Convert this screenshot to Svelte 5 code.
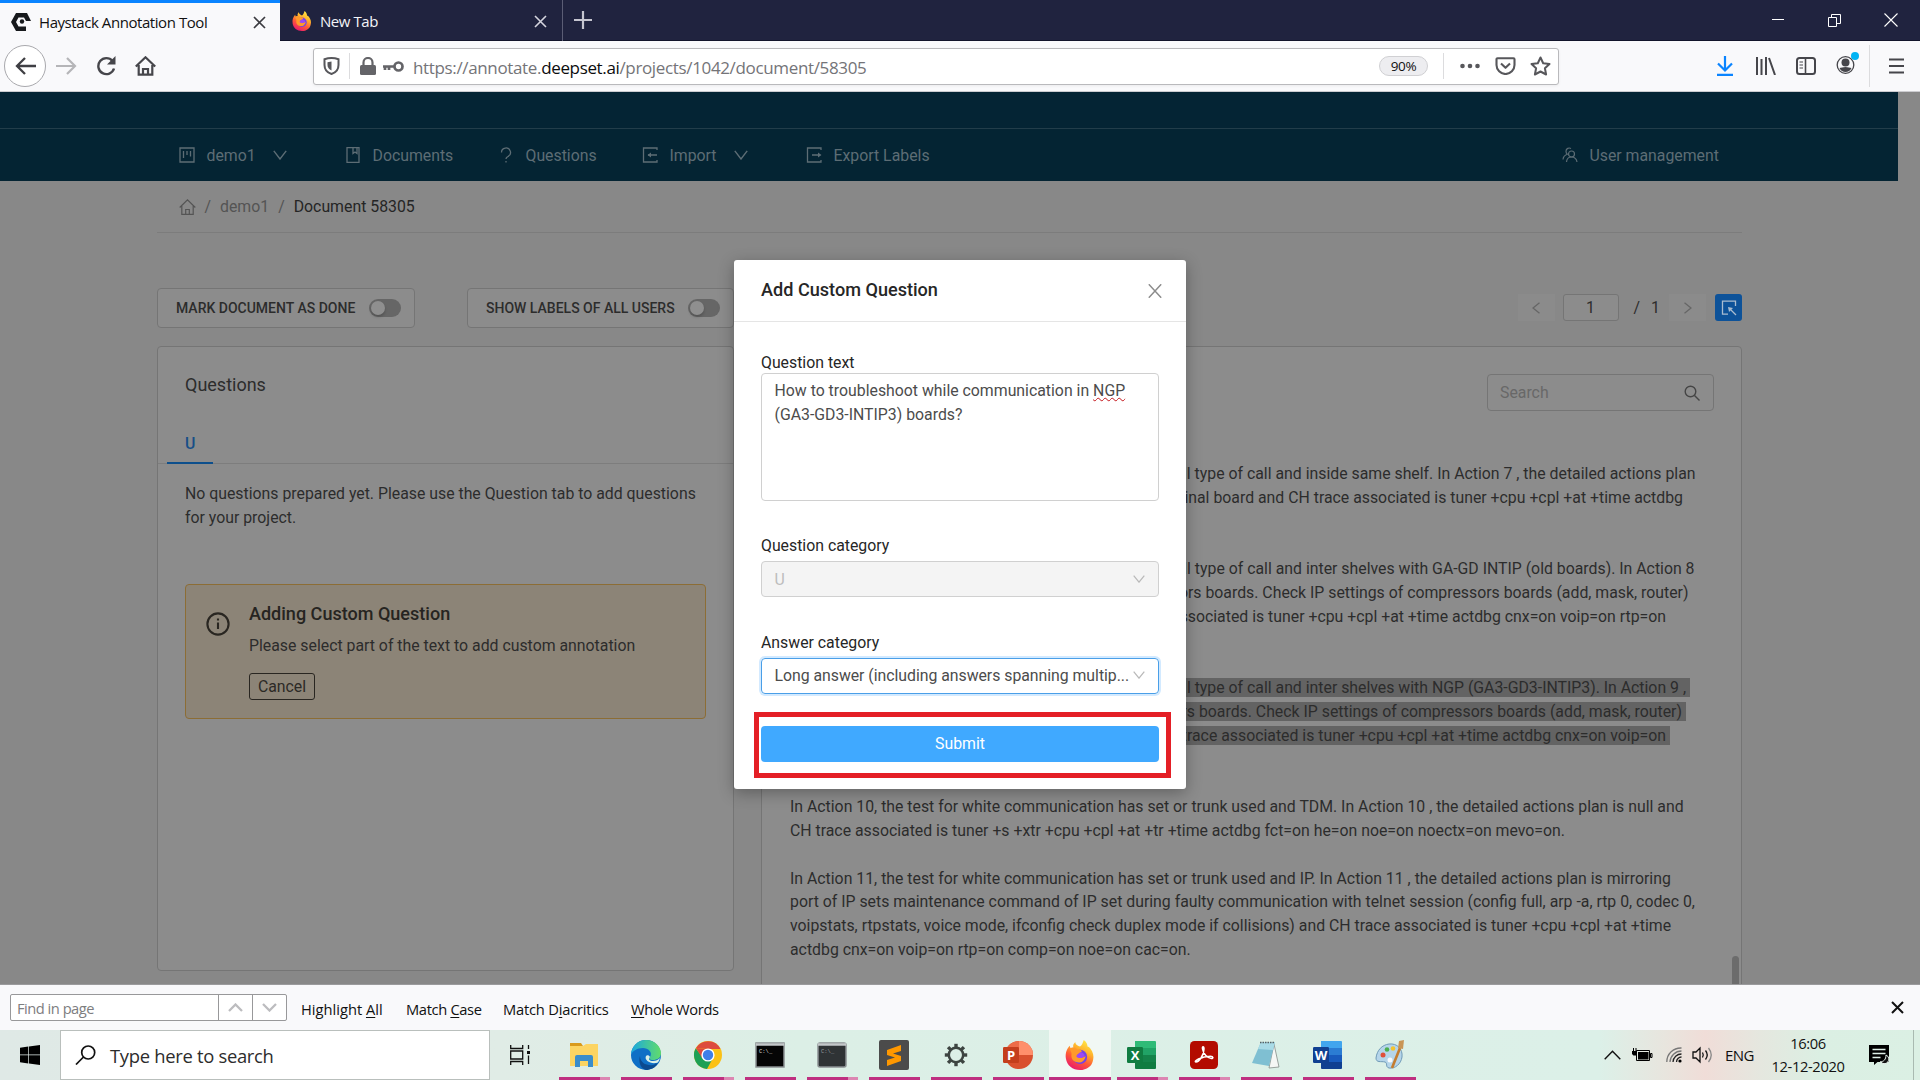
<script>
  const lead = [
    { right: 1695.5, text: 'all type of call and inside same shelf. In Action 7 , the detailed actions plan' },
    { right: 1683, text: 'inal board and CH trace associated is tuner +cpu +cpl +at +time actdbg' },
    null,
    null,
    { right: 1694.5, text: 'all type of call and inter shelves with GA-GD INTIP (old boards). In Action 8' },
    { right: 1688.5, text: 'ors boards. Check IP settings of compressors boards (add, mask, router)' },
    { right: 1666, text: 'associated is tuner +cpu +cpl +at +time actdbg cnx=on voip=on rtp=on' },
    null,
    null,
    { right: 1690, marked: true, text: 'all type of call and inter shelves with NGP (GA3-GD3-INTIP3). In Action 9 ,' },
    { right: 1686, marked: true, text: 'rs boards. Check IP settings of compressors boards (add, mask, router)' },
    { right: 1670, marked: true, text: 'trace associated is tuner +cpu +cpl +at +time actdbg cnx=on voip=on' },
    null,
    null
  ];
  const tail = [
    'In Action 10, the test for white communication has set or trunk used and TDM. In Action 10 , the detailed actions plan is null and',
    'CH trace associated is tuner +s +xtr +cpu +cpl +at +tr +time actdbg fct=on he=on noe=on noectx=on mevo=on.',
    '',
    'In Action 11, the test for white communication has set or trunk used and IP. In Action 11 , the detailed actions plan is mirroring',
    'port of IP sets maintenance command of IP set during faulty communication with telnet session (config full, arp -a, rtp 0, codec 0,',
    'voipstats, rtpstats, voice mode, ifconfig check duplex mode if collisions) and CH trace associated is tuner +cpu +cpl +at +time',
    'actdbg cnx=on voip=on rtp=on comp=on noe=on cac=on.'
  ];
  const apps = [
    { id: 'explorer', many: true }, { id: 'edge' }, { id: 'chrome', many: true }, { id: 'cmd' },
    { id: 'prompt', many: true }, { id: 'sublime' }, { id: 'settings' }, { id: 'ppt' },
    { id: 'firefox', active: true }, { id: 'excel', many: true }, { id: 'acrobat', many: true },
    { id: 'notepad' }, { id: 'word' }, { id: 'paint' }
  ];
  const teeth = [0, 45, 90, 135, 180, 225, 270, 315];
</script>

{#snippet fox(size)}
  <svg width={size} height={size} viewBox="0 0 32 32">
    <defs>
      <linearGradient id="foxA" x1="0.8" y1="0" x2="0.3" y2="1">
        <stop offset="0" stop-color="#fff04a" /><stop offset=".35" stop-color="#ffb32c" />
        <stop offset=".65" stop-color="#ff5a36" /><stop offset="1" stop-color="#e8176f" />
      </linearGradient>
    </defs>
    <path fill="url(#foxA)" d="M20 0c3 2 4 5 4 7 1 0 2 1 3 2 3 4 4 8 3 12-1 7-7 11-14 11C8 32 2 27 1 20 0 14 2 9 5 6l1 3 3-1c-1-3 1-5 2-6 0 3 3 4 5 5 2-1 3-4 4-7z" />
    <circle cx="16" cy="18" r="7.6" fill="#7543e5" />
    <path fill="#ff9a2a" d="M5 9c3-2 6-1 8 1 2 0 4 0 5 2-1 2-4 2-5 4 1 3 5 4 9 1-1 5-4 7-7 7-6 0-9-4-8-9 0-2-1-3-2-6z" />
    <path fill="#9b49f5" d="M12 17c1-2 3-2 4-4 3 0 5 2 5 4-3 3-8 3-9 0z" />
  </svg>
{/snippet}

{#snippet chevron(w, h)}
  <svg width={w} height={h} viewBox="0 0 14 10" preserveAspectRatio="none" fill="none" stroke="currentColor" stroke-width="1.4"><path d="M.8.8 7 9 13.2.8" /></svg>
{/snippet}

{#snippet office(letter, a, b, c, d)}
  <svg width="30" height="30" viewBox="0 0 30 30">
    <path fill={a} d="M8 1h20a1 1 0 0 1 1 1v6H8z" /><path fill={b} d="M8 8h21v7H8z" />
    <path fill={c} d="M8 15h21v7H8z" /><path fill={d} d="M8 22h21v6a1 1 0 0 1-1 1H9a1 1 0 0 1-1-1z" />
    <rect y="7" width="16" height="16" rx="1.2" fill={d} />
    <text x="8" y="20" text-anchor="middle" font-family="Open Sans, sans-serif" font-weight="700" font-size="13" fill="#fff">{letter}</text>
  </svg>
{/snippet}

<div class="screen">
  <header class="tabs">
    <div class="tab current">
      <svg width="20" height="20" viewBox="0 0 20 20"><path fill="#17191c" d="M5 1h11l4 8h-5l-2-3.500H7.500L5 10l2.500 4.500H15V19H5L0 10z" /><circle cx="11" cy="9.500" r="2.200" fill="#17191c" /></svg>
      <span class="label">Haystack Annotation Tool</span>
      <svg class="x" width="13" height="13" viewBox="0 0 13 13" stroke="#3b3b40" stroke-width="1.700"><path d="m1 1 11 11M12 1 1 12" /></svg>
    </div>
    <div class="tab other">
      {@render fox(20)}
      <span class="label">New Tab</span>
      <svg class="x" width="13" height="13" viewBox="0 0 13 13" stroke="#d5d5de" stroke-width="1.600"><path d="m1 1 11 11M12 1 1 12" /></svg>
    </div>
    <svg class="plus" width="18" height="18" viewBox="0 0 18 18" stroke="#c5c5d0" stroke-width="2.200"><path d="M9 0v18M0 9h18" /></svg>
    <div class="window">
      <svg width="12" height="14" viewBox="0 0 12 14" stroke="#fff"><path d="M0 6.500h12" /></svg>
      <svg width="13" height="13" viewBox="0 0 13 13" stroke="#fff" fill="none"><path d="M.5 3.500h8v9h-8zM3.500 3V.5h9v9H9" /></svg>
      <svg width="14" height="14" viewBox="0 0 14 14" stroke="#fff" stroke-width="1.100"><path d="m.5.5 13 13M13.500.5l-13 13" /></svg>
    </div>
  </header>

  <div class="toolbar">
    <div class="nav-buttons">
      <span class="back"><svg width="21" height="18" viewBox="0 0 21 18" fill="none" stroke="#3f3f44" stroke-width="2.300"><path d="M21 9H2M10 1 2 9l8 8" /></svg></span>
      <svg width="21" height="18" viewBox="0 0 21 18" fill="none" stroke="#b5b5b8" stroke-width="2.200"><path d="M0 9h19M11 1l8 8-8 8" /></svg>
      <svg width="20" height="20" viewBox="0 0 20 20" fill="none" stroke="#46464b" stroke-width="2.400"><path d="M16.500 5A8 8 0 1 0 18 12.500" /><path fill="#46464b" stroke="none" d="M19.500 0v8.500H11z" /></svg>
      <svg width="21" height="20" viewBox="0 0 21 20" fill="none" stroke="#46464b" stroke-width="2.200"><path d="M.8 10.500 10.500 1.300l9.700 9.200M3.700 9v9.700h13.600V9" /><path d="M8 19v-6h5v6" /></svg>
    </div>
    <div class="url">
      <svg width="17" height="18" viewBox="0 0 17 18" fill="none" stroke="#57575b" stroke-width="2"><path d="M8.500 1C6 1 3.500 1.500 1.500 2.200V8c0 4.500 3 7.800 7 9 4-1.200 7-4.500 7-9V2.200C13.500 1.500 11 1 8.500 1z" /><path d="M8.500 4.500v9c-2.500-1-4-3-4-5.500V5.200z" fill="#57575b" stroke="none" /></svg>
      <i class="rule"></i>
      <svg class="lock" width="16" height="18" viewBox="0 0 16 18"><rect y="8" width="16" height="10" rx="1.500" fill="#646468" /><path d="M3.500 9V5.500a4.500 4.500 0 0 1 9 0V9" fill="none" stroke="#646468" stroke-width="2.200" /></svg>
      <svg class="key" width="21" height="11" viewBox="0 0 21 11" fill="none" stroke="#646468" stroke-width="2.700"><circle cx="15.500" cy="5.500" r="4" /><path d="M11.500 5.500H0M2 5.500v3.500M6 5.500v3.500" /></svg>
      <span class="address">https://annotate.<b>deepset.ai</b>/projects/1042/document/58305</span>
      <span class="zoom">90%</span>
      <i class="rule tall"></i>
      <svg class="dots" width="20" height="6" viewBox="0 0 20 6" fill="#57575b"><circle cx="2.500" cy="3" r="2.300" /><circle cx="10" cy="3" r="2.300" /><circle cx="17.500" cy="3" r="2.300" /></svg>
      <svg class="pocket" width="21" height="18" viewBox="0 0 21 18" fill="none" stroke="#57575b" stroke-width="2.100" stroke-linejoin="round"><path d="M2.500 1.200h16q1 0 1 1V8a9 9 0 0 1-18 0V2.200q0-1 1-1z" /><path d="m6 6.500 4.500 4.300L15 6.500" /></svg>
      <svg width="21" height="20" viewBox="0 0 21 20" fill="none" stroke="#57575b" stroke-width="2" stroke-linejoin="round"><path d="m10.500 1.500 2.700 5.700 6.300.8-4.600 4.300 1.200 6.200-5.600-3-5.600 3 1.200-6.200L1.500 8l6.300-.8z" /></svg>
    </div>
    <div class="actions">
      <svg width="16" height="20" viewBox="0 0 16 20" fill="none" stroke="#0a84ff" stroke-width="2.200"><path d="M8 0v14M1 7.500l7 7 7-7M0 18.800h16" /></svg>
      <svg width="20" height="18" viewBox="0 0 20 18" stroke="#46464b" stroke-width="2"><path d="M1 0v18M5.500 2v16M10 0v18M13 1l6 17" /></svg>
      <svg width="20" height="18" viewBox="0 0 20 18" fill="none" stroke="#46464b" stroke-width="2"><rect x="1" y="1" width="18" height="16" rx="2.500" /><path d="M9.500 1v16" stroke-width="1.600" /><path d="M3.500 5H7M3.500 8H7M3.500 11H7" stroke-width="1.200" /></svg>
      <svg class="account" width="24" height="23" viewBox="0 0 24 23"><circle cx="9.500" cy="13" r="8.300" fill="none" stroke="#46464b" stroke-width="1.300" /><circle cx="9.500" cy="10.500" r="4" fill="#46464b" /><path d="M3.500 16c2 0 3-1 6-1s4 1 6 1c-1 2.500-3.500 4-6 4s-5-1.500-6-4z" fill="#46464b" /><circle cx="19" cy="4" r="4" fill="#00b3f4" /></svg>
      <i class="rule menu-rule"></i>
      <svg width="15" height="16" viewBox="0 0 15 16" stroke="#46464b" stroke-width="2.200"><path d="M0 1.500h15M0 8h15M0 14.500h15" /></svg>
    </div>
  </div>

  <main class="page">
    <div class="brand"></div>
    <nav class="menu">
      <span><svg width="16" height="16" viewBox="0 0 16 16" fill="none" stroke="currentColor" stroke-width="1.300"><path d="M1 1h14v14H1zM4.500 4v7M8 4v4M11.500 4v5.500" /></svg>demo1<em>{@render chevron(14, 10)}</em></span>
      <span><svg width="16" height="16" viewBox="0 0 16 16" fill="none" stroke="currentColor" stroke-width="1.300"><path d="M2 .7h12v14.600H2zM8 1v5.500l2-1.500 2 1.500V1" /></svg>Documents</span>
      <span><svg width="16" height="16" viewBox="0 0 16 16" fill="none" stroke="currentColor" stroke-width="1.300"><path d="M3.500 5.500a4.500 4.500 0 1 1 6.500 4Q8 10.500 8 12M8 14v1.600" /></svg>Questions</span>
      <span><svg width="16" height="16" viewBox="0 0 16 16" fill="none" stroke="currentColor" stroke-width="1.300"><path d="M15 3V1H1.500v14H15v-2M15 8H6" /><path d="m9 5.500-3.500 2.500L9 10.500z" fill="currentColor" stroke="none" /></svg>Import<em>{@render chevron(14, 10)}</em></span>
      <span><svg width="16" height="16" viewBox="0 0 16 16" fill="none" stroke="currentColor" stroke-width="1.300"><path d="M15 3V1H1.500v14H15v-2M6 8h8" /><path d="m12 5.500 3.500 2.500-3.500 2.500z" fill="currentColor" stroke="none" /></svg>Export Labels</span>
      <span><svg width="16" height="16" viewBox="0 0 16 16" fill="none" stroke="currentColor" stroke-width="1.200"><circle cx="9.500" cy="7" r="3" /><path d="M4.500 15c.2-3 2-5 5-5s5 2 5.500 5M9 1.500C7 .3 4 1.500 4 4.200c0 1.500.5 2.300 1.300 3C3 8 1.200 9.500 1 12.500" /></svg>User management</span>
    </nav>

    <div class="content">
      <div class="crumbs">
        <svg width="17" height="16" viewBox="0 0 17 16" fill="none" stroke="currentColor" stroke-width="1.200"><path d="M.7 8.500 8.500.9l7.800 7.600M2.800 7v8.400h11.400V7M6.700 15v-4.500h3.600V15" /></svg>
        <i>/</i><span>demo1</span><i>/</i><strong>Document 58305</strong>
      </div>

      <div class="controls">
        <div class="toggle">MARK DOCUMENT AS DONE<span class="switch"></span></div>
        <div class="toggle second">SHOW LABELS OF ALL USERS<span class="switch"></span></div>
        <div class="pager">
          <span class="step"><svg width="8" height="12" viewBox="0 0 8 12" fill="none" stroke="#666" stroke-width="1.300"><path d="M7.500.7 1 6l6.500 5.300" /></svg></span>
          <span class="number">1</span>
          <span class="slash">/</span><span>1</span>
          <span class="step next"><svg width="8" height="12" viewBox="0 0 8 12" fill="none" stroke="#666" stroke-width="1.300"><path d="M.5.7 7 6 .5 11.300" /></svg></span>
          <span class="select"><svg width="16" height="16" viewBox="0 0 16 16" fill="none" stroke="#a9bccf" stroke-width="1.300"><path d="M14.500 6V1.200H1.500v13H7M15 15 8.500 8.500" /><path d="m7 7 5 1-4 4z" fill="#a9bccf" stroke="none" /></svg></span>
        </div>
      </div>

      <div class="cards">
        <section class="card left">
          <h2>Questions</h2>
          <div class="tabbar"><span>U</span></div>
          <p>No questions prepared yet. Please use the Question tab to add questions<br />for your project.</p>
          <div class="alert">
            <svg width="24" height="24" viewBox="0 0 24 24" fill="none" stroke="#292621" stroke-width="2.100"><circle cx="12" cy="12" r="10.600" /><path d="M12 10.500V17M12 6.500v2" /></svg>
            <div>
              <h3>Adding Custom Question</h3>
              <div class="desc">Please select part of the text to add custom annotation</div>
              <button>Cancel</button>
            </div>
          </div>
        </section>
        <section class="card right">
          <div class="search">Search<svg width="16" height="16" viewBox="0 0 16 16" fill="none" stroke="#454545" stroke-width="1.400"><circle cx="6.500" cy="6.500" r="5.300" /><path d="m10.500 10.500 5 5" /></svg></div>
          <div class="doc">
            {#each lead as line}
              <div class="line end" style:width={line ? `${line.right - 790}px` : null}>{#if line}<span class:marked={line.marked}>{line.text}</span>{/if}</div>
            {/each}
            {#each tail as line}
              <div class="line">{line}</div>
            {/each}
          </div>
          <i class="thumb"></i>
        </section>
      </div>
    </div>

    <div class="modal">
      <div class="title">Add Custom Question
        <svg width="14" height="14" viewBox="0 0 14 14" stroke="#8c8c8c" stroke-width="1.500"><path d="m.8.3 12.400 13.400M13.200.3.8 13.700" /></svg>
      </div>
      <div class="body">
        <div class="caption first">Question text</div>
        <div class="area">How to troubleshoot while communication in <u>NGP</u><br />(GA3-GD3-INTIP3) boards?</div>
        <div class="caption">Question category</div>
        <div class="field disabled"><span>U</span>{@render chevron(12, 8)}</div>
        <div class="caption answer">Answer category</div>
        <div class="field focus"><span>Long answer (including answers spanning multip...</span>{@render chevron(12, 8)}</div>
        <button class="submit">Submit</button>
      </div>
      <i class="highlight"></i>
    </div>
  </main>

  <div class="findbar">
    <div class="find"><span>Find in page</span>
      <b><svg width="15" height="9" viewBox="0 0 15 9" fill="none" stroke="#bcbcbf" stroke-width="2.300"><path d="M1 8 7.500 1.500 14 8" /></svg></b>
      <b><svg width="15" height="9" viewBox="0 0 15 9" fill="none" stroke="#bcbcbf" stroke-width="2.300"><path d="m1 1 6.500 6.500L14 1" /></svg></b>
    </div>
    <span class="opt o1">Highlight <u>A</u>ll</span><span class="opt o2">Match <u>C</u>ase</span><span class="opt o3">Match D<u>i</u>acritics</span><span class="opt"><u>W</u>hole Words</span>
    <svg class="close" width="13" height="13" viewBox="0 0 13 13" stroke="#111" stroke-width="2"><path d="m1 1 11 11M12 1 1 12" /></svg>
  </div>

  <footer class="taskbar">
    <div class="start"><svg width="20" height="20" viewBox="0 0 20 20"><path d="M0 2.800 8.300 1.600v8H0zM9 1.500 20 0v9.600H9zM0 10.300h8.300v8.100L0 17.200zM9 10.300h11V20L9 18.500z" /></svg></div>
    <div class="task-search"><svg width="21" height="20" viewBox="0 0 21 20" fill="none" stroke="#111" stroke-width="1.700"><circle cx="13.200" cy="7.500" r="6.500" /><path d="M8.500 12 1 19.500" /></svg><span>Type here to search</span></div>
    <div class="view"><svg width="21" height="20" viewBox="0 0 21 20" fill="none" stroke="#111" stroke-width="1.300"><path d="M.7 0v3.500h12V0M.7 20v-3.500h12V20M.7 6h12v8H.7zM18.500 0v4M18.500 10.500V19" /><path d="M17 6h3v3h-3z" fill="#111" stroke="none" /></svg></div>
    <div class="apps">
      {#each apps as app}
        <div class="app" class:active={app.active} class:many={app.many}>
          {#if app.id === 'explorer'}
            <svg width="30" height="26" viewBox="0 0 30 26"><path fill="#d99a1c" d="M1 1h11l2 3H1z" /><path fill="#fcd462" d="M1 4h13l3-2h12v22H1z" /><path fill="#3a8dcb" d="M6 25V15q0-2 2-2h14q2 0 2 2v10h-5v-6h-8v6z" /></svg>
          {:else if app.id === 'edge'}
            <svg width="32" height="32" viewBox="0 0 32 32"><defs><linearGradient id="edgeG"><stop stop-color="#1aa7e0" /><stop offset="1" stop-color="#62dc6a" /></linearGradient></defs><circle cx="16" cy="16" r="15" fill="#0f6fc6" /><path fill="url(#edgeG)" d="M1 15C2 7 8 1 16 1c9 0 15 7 15 13 0 5-4 7-8 7-3 0-5-1-3-3 3-5-2-9-7-9C7 9 3 12 1 15z" /><path fill="#0c4a8f" d="M10 17c0 7 7 10 13 9l5-2c-3 5-8 7-12 7-5-1-8-8-6-14z" /><path fill="#dcefe7" d="M20 18c-2 2-1 4 3 4 3 0 5-1 7-3-1 3-2 5-4 5-6 1-12-3-10-7 1-1 3-1 4 1z" /></svg>
          {:else if app.id === 'chrome'}
            <svg width="30" height="30" viewBox="0 0 30 30"><circle cx="15" cy="15" r="14" fill="#fbc116" /><path fill="#dd4b3e" d="M3 8a14 14 0 0 1 24.500 1H15z" /><path fill="#1ea055" d="M2.700 8.200A14 14 0 0 0 14 29l6-11-10 0z" /><path fill="#dd4b3e" d="M3 8 9 18l6-9z" /><circle cx="15" cy="15" r="6.600" fill="#fff" /><circle cx="15" cy="15" r="5.200" fill="#3f7fe8" /></svg>
          {:else if app.id === 'cmd' || app.id === 'prompt'}
            <svg width="30" height="26" viewBox="0 0 30 26"><rect x="1" y="1" width="28" height="24" rx={app.id === 'cmd' ? 0 : 2} fill={app.id === 'cmd' ? '#050505' : '#2f3335'} stroke="#8b9092" stroke-width="1.500" /><path d="M1 2.500h28" stroke="#c4c8ca" stroke-width="2.500" /><text x="4" y="11" font-family="Liberation Mono, monospace" font-size="5.500" fill={app.id === 'cmd' ? '#ddd' : '#9a9da0'}>C:\_</text></svg>
          {:else if app.id === 'sublime'}
            <svg width="30" height="30" viewBox="0 0 30 30"><rect width="30" height="30" rx="2" fill="#4b4b4b" /><path fill="#ff9800" d="m8 10 14-5v6l-8 2.500 8 2.500v5L8 26v-6l8-2.500L8 15z" /></svg>
          {:else if app.id === 'settings'}
            <svg width="24" height="24" viewBox="0 0 24 24" fill="none" stroke="#3d4441"><circle cx="12" cy="12" r="7.200" stroke-width="2.500" />{#each teeth as angle}<path d="M12 .8v4" stroke-width="3.400" transform="rotate({angle} 12 12)" />{/each}</svg>
          {:else if app.id === 'ppt'}
            <svg width="30" height="30" viewBox="0 0 30 30"><circle cx="16" cy="15" r="14" fill="#d9502e" /><path fill="#ff8f6b" d="M16 1a14 14 0 0 1 14 14H16z" /><path fill="#ed6c47" d="M16 1v14H2A14 14 0 0 1 16 1z" /><rect y="7" width="16" height="16" rx="1.200" fill="#c43e1c" /><text x="8" y="20" text-anchor="middle" font-family="Open Sans, sans-serif" font-weight="700" font-size="13" fill="#fff">P</text></svg>
          {:else if app.id === 'firefox'}
            {@render fox(30)}
          {:else if app.id === 'excel'}
            {@render office('X', '#2fbb77', '#21a366', '#14834a', '#107c41')}
          {:else if app.id === 'word'}
            {@render office('W', '#41a5ee', '#2b7cd3', '#185abd', '#103f91')}
          {:else if app.id === 'acrobat'}
            <svg width="28" height="28" viewBox="0 0 28 28"><rect width="28" height="28" rx="4.500" fill="#b30b00" /><path d="M6 21c3 0 8-7 8-13 0-3-2-3-1.500 0 .8 5 5 9 9 9.500 2 0 2-2.200-1-2.200-4 0-9 1.200-12 2.700-3 1.500-4 3-2.500 3z" fill="none" stroke="#fff" stroke-width="1.500" /></svg>
          {:else if app.id === 'notepad'}
            <svg width="30" height="28" viewBox="0 0 30 28"><path fill="#f6f7f5" stroke="#848b88" stroke-width=".8" d="m23 3 5 23-10 1z" /><path fill="#7fbfd2" d="M10 1h14l-6 24-17-3z" /><path fill="#a9dbe7" d="M10 1h14l-2 8-15-1z" /><path stroke="#596264" stroke-width="1.500" stroke-dasharray="1.500 1" d="M9 1.500h15" /></svg>
          {:else}
            <svg width="30" height="30" viewBox="0 0 30 30"><path fill="#b5d5ea" stroke="#6f9ab7" d="M14 4C22 3 28 9 27 17c-1 7-7 12-13 11-4-1-1-5-4-6-4-1-9 1-9-4C2 10 7 5 14 4z" /><circle cx="8" cy="15" r="2.500" fill="#df4f3a" /><circle cx="12" cy="9.500" r="2.300" fill="#4caf50" /><circle cx="18" cy="8.500" r="2.300" fill="#f4c430" /><circle cx="15" cy="20" r="2.500" fill="#f8fbfd" /><path d="M17 28 25 8" stroke="#c47d30" stroke-width="2.600" /><path fill="#c99555" d="m23 8 1-7 5-1-1 9z" /></svg>
          {/if}
          <i class="bar"></i>
        </div>
      {/each}
    </div>
    <div class="tray">
      <svg class="up" width="17" height="10" viewBox="0 0 17 10" fill="none" stroke="#111" stroke-width="1.400"><path d="m.7 9.300 7.800-8 7.800 8" /></svg>
      <svg class="battery" width="21" height="14" viewBox="0 0 21 14"><path fill="none" stroke="#000" d="M4.500 2.500h13v10h-13zM18.500 5.500v4h1.500v-4z" /><path d="M6 4h10.500v7.500H6zM0 3h5v3L4 7.500H1.500L0 6zM1 0h1v3H1zM3.500 0h1v3h-1z" /></svg>
      <svg class="wifi" width="16" height="16" viewBox="0 0 16 16" fill="none" stroke-width="1.300"><circle cx="14" cy="14" r="1.600" fill="#000" /><path stroke="#222" d="M10.500 15a5 5 0 0 1 5-5M7 15a8.500 8.500 0 0 1 8.500-8" /><path stroke="#777" d="M4 15A11.500 11.500 0 0 1 15.500 4M.8 15A14 14 0 0 1 15.500 1" /></svg>
      <svg class="sound" width="22" height="18" viewBox="0 0 22 18" fill="none" stroke="#111" stroke-width="1.300"><path d="M1 6h3l4-4v14l-4-4H1zM10.500 6.500q1.500 2.500 0 5M13.500 4.500q3.500 4.500 0 9" /><path stroke="#888" d="M16.500 2q5.500 7 0 14" /></svg>
      <span class="lang">ENG</span>
      <div class="clock"><span>16:06</span><span>12-12-2020</span></div>
      <svg class="note" width="20" height="20" viewBox="0 0 20 20"><path d="M0 0h20v17H8.500L5 20v-3H0z" /><path d="M3.500 4.500h13M3.500 8.500h13M3.500 12.500h8" stroke="#dff0e8" stroke-width="1.300" /><path d="M17 10a4.500 4.500 0 1 1-5.500 6.500c3 .5 5.500-2 5.500-6.500z" fill="#111" stroke="#e6f2ec" /></svg>
      <i class="peek"></i>
    </div>
  </footer>
</div>

<style>
  :global(body) { margin: 0; }
  .screen { width: 1920px; height: 1080px; overflow: hidden; display: flex; flex-direction: column; font-family: 'Open Sans', 'Noto Sans', sans-serif; color: #111; box-sizing: border-box; }
  .screen :global(*) { box-sizing: border-box; }
  svg { display: block; flex: none; }
  button { margin: 0; font: inherit; }

  .tabs { height: 41px; flex: none; background: #20233f; border-bottom: 1px solid #12142b; display: flex; align-items: center; }
  .tab { height: 41px; display: flex; align-items: center; font-size: 15px; letter-spacing: -.43px; padding: 2px 14px 0 11px; }
  .tab .label { margin-left: 8px; flex: 1; white-space: nowrap; }
  .current { width: 280px; background: #f9f9fb; border-top: 3px solid #0a84ff; padding-top: 0; margin-bottom: -1px; }
  .other { width: 283px; color: #f4f4f8; border-right: 1px solid #5b5d75; padding-right: 15px; padding-left: 12px; }
  .plus { margin-left: 11px; }
  .window { margin-left: auto; display: flex; align-items: center; padding-right: 22px; }
  .window svg:nth-child(2) { margin-left: 44px; }
  .window svg:nth-child(3) { margin-left: 43px; }

  .toolbar { height: 51px; flex: none; background: #f9f9fb; border-bottom: 1px solid #ccccd0; display: flex; align-items: center; }
  .nav-buttons { display: flex; align-items: center; width: 313px; flex: none; padding-left: 4px; }
  .back { width: 42px; height: 42px; border: 1px solid #a9a9ad; border-radius: 50%; background: #fff; display: flex; align-items: center; justify-content: center; margin-right: 10px; }
  .nav-buttons > svg:nth-child(3) { margin-left: 19px; }
  .nav-buttons > svg:nth-child(4) { margin-left: 19px; }
  .url { width: 1246px; flex: none; height: 37px; border: 1px solid #b9b9bc; border-radius: 3px; background: #fff; display: flex; align-items: center; padding: 0 7px 0 9px; box-shadow: 0 1px 3px rgba(0,0,0,.06); }
  .rule { width: 1px; height: 26px; background: #dcdcde; margin-left: 9px; }
  .lock { margin-left: 10px; }
  .key { margin-left: 7px; }
  .address { flex: 1; margin-left: 9px; padding-top: 2px; font-size: 17px; color: #747478; letter-spacing: -.35px; white-space: nowrap; }
  .address b { font-weight: 400; color: #0c0c0d; }
  .zoom { width: 49px; height: 20px; border-radius: 10px; border: 1px solid #d0d0d3; background: #ededf0; font-size: 13.500px; letter-spacing: -.3px; line-height: 19px; text-align: center; }
  .rule.tall { margin-left: 15px; }
  .dots { margin-left: 16px; }
  .pocket { margin: 0 14px 0 15px; }
  .actions { display: flex; align-items: center; flex: 1; padding-left: 158px; }
  .actions svg + svg { margin-left: 20px; }
  .actions svg:nth-child(2) { margin-left: 23px; }
  .actions .account { margin: -5px 0 0 20px; }
  .menu-rule { height: 42px; margin: 0 19px 0 9px; }

  .page { position: relative; height: 892px; flex: none; background: #888; overflow: hidden; font-family: Roboto, sans-serif; font-size: 15.830px; color: #2c2c2c; }
  .brand { width: 1898px; height: 37px; background: #042434; border-bottom: 1px solid #223d4a; }
  .menu { width: 1898px; height: 52px; background: #042433; display: grid; grid-template-columns: 166px 153px 144px 164px 1fr 179px; padding: 0 157px 0 179px; color: #5d6d75; align-items: center; }
  .menu span { display: flex; align-items: center; gap: 11.500px; white-space: nowrap; }
  .menu em { margin-left: 6px; }
  .content { width: 1585px; margin-left: 157px; }
  .crumbs { height: 52px; border-bottom: 1px solid #7c7c7c; display: flex; align-items: center; color: #545454; padding-left: 21.500px; }
  .crumbs i { font-style: normal; margin: 0 9px; }
  .crumbs strong { font-weight: 400; color: #252525; }
  .controls { margin-top: 55px; height: 40px; display: flex; }
  .toggle { height: 40px; width: 258px; border: 1px solid #757575; border-radius: 4px; background: #8c8c8c; display: flex; align-items: center; justify-content: space-between; padding: 0 13px 0 18px; font-size: 14px; font-weight: 500; white-space: nowrap; }
  .second { width: 267px; margin-left: 52px; }
  .switch { width: 32px; height: 18px; border-radius: 9px; background: #666; padding: 2px; }
  .switch::before { content: ''; display: block; width: 14px; height: 14px; border-radius: 50%; background: #8f8f8f; box-shadow: 0 2px 3px rgba(0,0,0,.2); }
  .pager { margin-left: auto; height: 27px; margin-top: 6px; display: flex; align-items: center; }
  .step { width: 37px; height: 27px; background: #8b8b8b; display: flex; align-items: center; justify-content: center; }
  .number { width: 56px; height: 27px; border: 1px solid #757575; border-radius: 3px; background: #8c8c8c; margin-left: 8px; text-align: center; line-height: 26px; }
  .slash { margin: 0 11px 0 15px; }
  .next { margin-left: 9px; }
  .select { width: 27px; height: 27px; border-radius: 3px; background: #0d5299; margin-left: 9px; display: flex; align-items: center; justify-content: center; }
  .cards { display: flex; gap: 27px; margin-top: 18px; }
  .card { border: 1px solid #757575; border-radius: 4px; background: #8c8c8c; }
  .left { width: 577px; height: 625px; }
  .left h2 { margin: 25px 0 0 27px; font-size: 18px; line-height: 26px; font-weight: 400; }
  .tabbar { height: 50px; margin-top: 16px; border-bottom: 1px solid #7d7d7d; padding-left: 9px; }
  .tabbar span { display: block; width: 46px; height: 50px; border-bottom: 2px solid #0d4f8c; color: #174f87; font-weight: 500; padding: 18px 0 0 18px; line-height: 24px; }
  .left p { margin: 18px 0 0 27px; line-height: 24px; white-space: nowrap; }
  .alert { margin: 54px 27px 0; height: 135px; border: 1px solid #8c6d35; border-radius: 4px; background: #8c8477; display: flex; padding: 15px 0 0 19.500px; }
  .alert > svg { margin: 12px 19.500px 0 0; }
  .alert h3 { margin: 0; font-size: 18.050px; line-height: 27px; font-weight: 500; color: #262421; }
  .desc { margin-top: 7px; line-height: 24px; white-space: nowrap; }
  .alert button { display: block; margin-top: 15px; width: 66px; height: 27px; padding: 0; border: 1px solid #292621; border-radius: 3px; background: none; color: #2c2a26; }
  .right { position: relative; width: 981px; height: 660px; padding: 27px 27px 0 28px; }
  .search { height: 37px; width: 227px; margin-left: auto; border: 1px solid #757575; border-radius: 4px; display: flex; align-items: center; justify-content: space-between; padding: 0 13px 0 12px; color: #686868; }
  .doc { margin-top: 51px; }
  .line { height: 23.800px; line-height: 23.800px; white-space: nowrap; }
  .end { text-align: right; }
  .marked { background: #636363; padding-right: 4px; }
  .thumb { position: absolute; right: 2px; top: 609px; width: 7px; height: 60px; border-radius: 4px 4px 0 0; background: #6c6c6c; }

  .modal { position: absolute; left: 734px; top: 168px; width: 452px; height: 529px; border-radius: 3px; background: #fff; box-shadow: 0 4px 16px rgba(0,0,0,.3); color: #262626; }
  .title { height: 62px; border-bottom: 1px solid #e5e5e5; display: flex; align-items: center; justify-content: space-between; padding: 0 24px 2px 27px; font-size: 18.100px; font-weight: 500; }
  .title svg { position: relative; top: 1px; }
  .body { padding: 0 27px; }
  .caption { line-height: 24px; margin-top: 33px; height: 27px; }
  .caption.first { margin-top: 29px; height: 22px; }
  .caption.answer { margin-top: 34px; }
  .area { height: 128px; border: 1px solid #d0d0d0; border-radius: 4px; padding: 5px 12.500px; line-height: 24px; color: #4c4c4c; white-space: nowrap; }
  .area u { text-decoration: underline wavy #c4161c 1px; text-underline-offset: 1px; }
  .field { height: 36px; border: 1px solid #d0d0d0; border-radius: 4px; display: flex; align-items: center; justify-content: space-between; padding: 0 13px 0 12.500px; color: #4c4c4c; white-space: nowrap; }
  .field svg { color: #b9b9b9; }
  .disabled { background: #f4f4f4; }
  .disabled span { color: #bdbdbd; }
  .focus { border-color: #4a9fe8; box-shadow: 0 0 0 2px #d3eaff; padding-bottom: 2px; letter-spacing: -.03px; }
  .submit { display: block; margin-top: 32px; width: 398px; height: 36px; border: 0; border-radius: 4px; background: #40a9ff; color: #fff; padding-bottom: 3px; }
  .highlight { position: absolute; left: 20px; top: 452px; width: 417px; height: 66px; border: 5px solid #e41f26; }

  .findbar { height: 46px; flex: none; background: #f9f9fb; border-top: 1px solid #9b9b9d; display: flex; align-items: center; padding: 0 16px 0 10px; font-size: 14.700px; letter-spacing: -.35px; white-space: nowrap; }
  .find { width: 277px; height: 27px; border: 1px solid #98989a; border-radius: 2px; background: #fff; display: flex; margin-right: 14px; color: #7d7d80; line-height: 26px; letter-spacing: -.5px; }
  .find span { flex: 1; padding-left: 6px; }
  .find b { width: 34px; border-left: 1px solid #98989a; display: flex; align-items: center; justify-content: center; }
  .opt { padding-top: 2px; }
  .opt u { text-underline-offset: 2px; }
  .o1 { width: 105px; letter-spacing: 0; } .o2 { width: 97px; } .o3 { width: 128px; letter-spacing: -.2px; }
  .close { margin-left: auto; }

  .taskbar { height: 50px; flex: none; display: flex; background: linear-gradient(90deg, #dfe9e6 0, #e0ece6 500px, #dcefe6 800px, #dcf0e8 1600px, #e8e5de 1665px, #f0ddd8 1705px, #e5e7df 1760px, #dbefe3 1820px, #dbf0e4 1920px); }
  .start { width: 60px; display: flex; align-items: center; justify-content: center; }
  .task-search { width: 430px; background: #fff; border: 1px solid #b9bfbc; display: flex; align-items: center; padding-left: 14px; font-size: 18.400px; letter-spacing: -.3px; color: #2c2c2c; }
  .task-search span { margin-left: 14px; }
  .view { width: 63px; display: flex; align-items: center; padding-left: 20px; }
  .apps { display: flex; }
  .app { position: relative; width: 62px; display: flex; align-items: center; justify-content: center; }
  .bar { position: absolute; left: 6px; bottom: 0; width: 51px; height: 3px; background: #bf2f80; }
  .many .bar { background: linear-gradient(90deg, #bf2f80 41px, #dc86b2 41px); }
  .active { background: #f1f8f4; }
  .active .bar { left: 0; width: 62px; }
  .tray { display: flex; flex: 1; align-items: center; padding-left: 183px; }
  .battery { margin-left: 11px; }
  .wifi { margin-left: 13px; }
  .sound { margin-left: 10px; }
  .lang { margin-left: 11px; width: 30px; font-size: 15px; letter-spacing: -.6px; }
  .clock { width: 76px; margin-left: 15px; display: flex; flex-direction: column; align-items: center; font-size: 14.700px; line-height: 23px; letter-spacing: -.35px; }
  .note { margin-left: 23px; }
  .peek { width: 1px; height: 50px; background: #a9bab1; margin-left: 24px; }
</style>
